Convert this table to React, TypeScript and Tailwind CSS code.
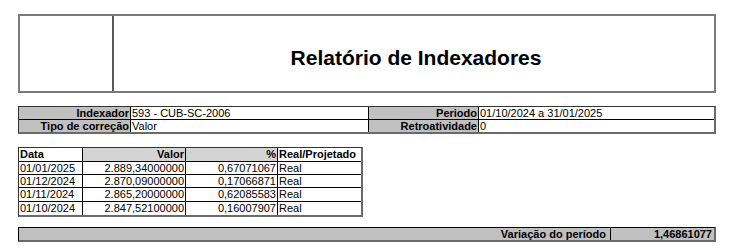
import React from "react";

const rows = [
  ["01/01/2025", "2.889,34000000", "0,67071067", "Real", "h-[13px]"],
  ["01/12/2024", "2.870,09000000", "0,17066871", "Real", "h-[13px]"],
  ["01/11/2024", "2.865,20000000", "0,62085583", "Real", "h-[14px]"],
  ["01/10/2024", "2.847,52100000", "0,16007907", "Real", "h-[13px]"],
];

export default function App() {
  return (
    <div
      className="w-[739px] h-[250px] bg-white text-black overflow-hidden"
      style={{ fontFamily: '"Liberation Sans", Arial, sans-serif' }}
    >
      <div className="ml-[18px] w-[698px] pt-[14px]">
        {/* Header */}
        <div className="flex h-[79px] border-2 border-[#7a7a7a]">
          <div className="w-[94px] border-r-2 border-[#5a5a5a]" />
          <div className="flex-1 flex items-center justify-center pt-[8px]">
            <span className="text-[21px] font-bold leading-none pl-[4px]">Relatório de Indexadores</span>
          </div>
        </div>

        {/* Info table */}
        <div className="mt-[13px] border-l border-t border-[#333] border-r-2 border-r-[#6a6a6a] border-b-2 border-b-[#6a6a6a] text-[11px] leading-none">
          <div className="grid grid-cols-[112px_238px_110px_1fr] h-[13px] border-b border-black">
            <div className="bg-[#c0c0c0] border-r border-black flex items-center justify-end pr-[1px] font-bold">Indexador</div>
            <div className="border-r border-black flex items-center pl-[1px]">593 - CUB-SC-2006</div>
            <div className="bg-[#c0c0c0] border-r border-black flex items-center justify-end pr-[1px] font-bold">Periodo</div>
            <div className="flex items-center pl-[1px]">01/10/2024 a 31/01/2025</div>
          </div>
          <div className="grid grid-cols-[112px_238px_110px_1fr] h-[12px]">
            <div className="bg-[#c0c0c0] border-r border-black flex items-center justify-end pr-[1px] font-bold">Tipo de correção</div>
            <div className="border-r border-black flex items-center pl-[1px]">Valor</div>
            <div className="bg-[#c0c0c0] border-r border-black flex items-center justify-end pr-[1px] font-bold">Retroatividade</div>
            <div className="flex items-center pl-[1px]">0</div>
          </div>
        </div>

        {/* Data table */}
        <div className="mt-[13px] w-[345px] border-l border-t border-[#333] border-r-2 border-r-[#6a6a6a] border-b-2 border-b-[#6a6a6a] text-[11px] leading-none">
          <div className="grid grid-cols-[64px_103px_92px_1fr] h-[14px] border-b border-black font-bold">
            <div className="border-r border-black flex items-center pl-[1px]">Data</div>
            <div className="bg-[#d4d4d4] border-r border-black flex items-center justify-end pr-[1px]">Valor</div>
            <div className="bg-[#d4d4d4] border-r border-black flex items-center justify-end pr-[1px]">%</div>
            <div className="flex items-center pl-[1px]">Real/Projetado</div>
          </div>
          {rows.map((r, i) => (
            <div
              key={i}
              className={`grid grid-cols-[64px_103px_92px_1fr] ${r[4]} ${i < rows.length - 1 ? "border-b border-black" : ""}`}
            >
              <div className="border-r border-black flex items-center pl-[1px]">{r[0]}</div>
              <div className="border-r border-black flex items-center justify-end pr-[1px]">{r[1]}</div>
              <div className="border-r border-black flex items-center justify-end pr-[1px]">{r[2]}</div>
              <div className="flex items-center pl-[1px]">{r[3]}</div>
            </div>
          ))}
        </div>

        {/* Footer */}
        <div className="mt-[10px] flex h-[15px] bg-[#c0c0c0] border-l border-t border-black border-r-2 border-r-[#6a6a6a] border-b-2 border-b-[#6a6a6a] text-[11px] leading-none font-bold">
          <div className="flex-1 border-r border-black flex items-center justify-end pr-[4px]">Variação do período</div>
          <div className="w-[103px] flex items-center justify-end pr-[2px]">1,46861077</div>
        </div>
      </div>
    </div>
  );
}
